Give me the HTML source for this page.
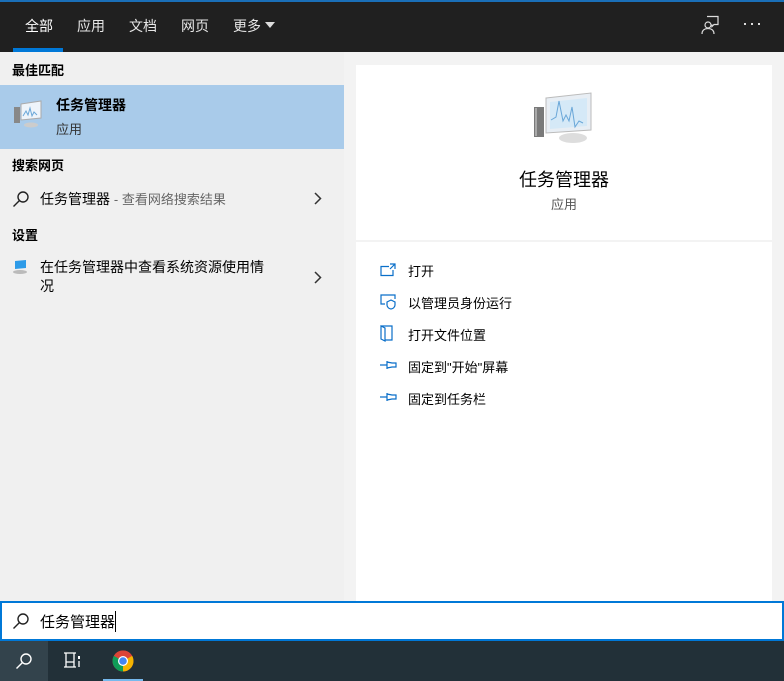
<!DOCTYPE html>
<html><head><meta charset="utf-8"><style>
*{margin:0;padding:0;box-sizing:border-box}
body{width:784px;height:681px;overflow:hidden;position:relative;background:#f0f0f0;font-family:"Liberation Sans","Noto Sans CJK SC",sans-serif;font-size:14px;color:#000}
.abs{position:absolute}
#top{left:0;top:0;width:784px;height:52px;background:#202020;border-top:2px solid #1a6fb8}
.tab{position:absolute;top:14px;color:#e6e6e6;font-size:14px}
#left{left:0;top:52px;width:344px;height:549px;background:#f0f0f0}
#right{left:344px;top:52px;width:440px;height:549px;background:#f3f3f3}
.card{position:absolute;left:356px;width:416px;background:#fff}
.h{position:absolute;left:12px;font-size:13px;font-weight:bold}
.act{position:absolute;left:408px;font-size:13px}
.ai{position:absolute;left:380px}
</style></head><body>
<div id="top" class="abs">
 <div class="tab" style="left:25px;color:#fff">全部</div>
 <div class="abs" style="left:13px;top:46px;width:50px;height:4px;background:#0078d7"></div>
 <div class="tab" style="left:77px">应用</div>
 <div class="tab" style="left:129px">文档</div>
 <div class="tab" style="left:181px">网页</div>
 <div class="tab" style="left:233px">更多</div>
 <svg class="abs" style="left:265px;top:20px" width="10" height="6"><path d="M0 0h10L5 6z" fill="#ddd"/></svg>
 <svg class="abs" style="left:701px;top:13px" width="18" height="20" fill="none" stroke="#ddd" stroke-width="1.2"><path d="M6 1.5h11v8h-4l-2 2v-2"/><circle cx="7" cy="10" r="3"/><path d="M1 19c0-4 3-5.5 6-5.5s6 1.5 6 5.5"/></svg>
 <div class="abs" style="left:744px;top:21px;width:16px;height:2px;background:repeating-linear-gradient(90deg,#ddd 0 2px,transparent 2px 7px)"></div>
</div>
<div id="left" class="abs"></div>
<div id="right" class="abs"></div>
<div class="h" style="top:60px">最佳匹配</div>
<div class="abs" style="left:0;top:85px;width:344px;height:64px;background:#a9cbea"></div>
<svg class="abs" style="left:12px;top:98px" width="32" height="32"><rect x="2" y="9" width="6" height="16" fill="#888"/><path d="M9 6l20-3v17L9 22z" fill="#eef4fa" stroke="#aaa"/><path d="M11 18l3-5 2 4 2-7 2 8 2-4 3 3" fill="none" stroke="#6aa7d8"/><ellipse cx="19" cy="27" rx="7" ry="2.5" fill="#ccc"/></svg>
<div class="abs" style="left:56px;top:95px;font-size:14px;font-weight:bold">任务管理器</div>
<div class="abs" style="left:56px;top:119px;font-size:13px;color:#333">应用</div>
<div class="h" style="top:155px">搜索网页</div>
<svg class="abs" style="left:12px;top:190px" width="18" height="18" fill="none" stroke="#222" stroke-width="1.4"><circle cx="11" cy="7" r="5"/><path d="M7.5 10.5L1.5 16.5"/></svg>
<div class="abs" style="left:40px;top:189px;font-size:14px">任务管理器 <span style="font-size:13px;color:#666">- 查看网络搜索结果</span></div>
<svg class="abs" style="left:314px;top:192px" width="8" height="13" fill="none" stroke="#333" stroke-width="1.5"><path d="M1 1l5.5 5.5L1 12"/></svg>
<div class="h" style="top:225px">设置</div>
<svg class="abs" style="left:11px;top:259px" width="18" height="16"><path d="M4 2l11 -1v8L4 10z" fill="#2e9be8"/><ellipse cx="9" cy="13" rx="7" ry="2" fill="#bbb"/></svg>
<div class="abs" style="left:40px;top:258px;font-size:14px;line-height:19px;width:228px;word-break:break-all">在任务管理器中查看系统资源使用情况</div>
<svg class="abs" style="left:314px;top:271px" width="8" height="13" fill="none" stroke="#333" stroke-width="1.5"><path d="M1 1l5.5 5.5L1 12"/></svg>

<div class="card" style="top:65px;height:175px"></div>
<div class="card" style="top:242px;height:359px"></div>
<svg class="abs" style="left:531px;top:90px" width="66" height="56"><rect x="3" y="17" width="10" height="30" fill="#7a7a7a"/><rect x="4" y="18" width="2" height="28" fill="#aaa"/><path d="M15 8l45-5v37l-45 3z" fill="#e8eef4" stroke="#bbb"/><path d="M19 12l37-4v28l-37 3z" fill="#d5e9f7"/><path d="M20 30l5-3 3-16 4 20 3-6 3 6 3-14 3 20 4-6 4 2" fill="none" stroke="#6aa7d8"/><ellipse cx="42" cy="48" rx="14" ry="5" fill="#ddd"/></svg>
<div class="abs" style="left:519px;top:166px;font-size:18px">任务管理器</div>
<div class="abs" style="left:551px;top:194px;font-size:13px;color:#555">应用</div>

<svg class="ai" style="top:263px" width="16" height="14" fill="none" stroke="#0a6fc9" stroke-width="1.2"><path d="M9 3.5H1v9h12V7"/><path d="M10 1h5v5M15 1l-5 5"/></svg>
<div class="act" style="top:261px">打开</div>
<svg class="ai" style="top:294px" width="16" height="16" fill="none" stroke="#0a6fc9" stroke-width="1.2"><path d="M5 10H1V1h14v4"/><path d="M7 8l4-2 4 2v3c0 2-2 4-4 4s-4-2-4-4z"/></svg>
<div class="act" style="top:293px">以管理员身份运行</div>
<svg class="ai" style="top:325px" width="14" height="17" fill="none" stroke="#0a6fc9" stroke-width="1.2"><path d="M1 1h11v14H5"/><path d="M1 1l4 2v13l-4-2z"/></svg>
<div class="act" style="top:325px">打开文件位置</div>
<svg class="ai" style="top:360px" width="17" height="10" fill="none" stroke="#0a6fc9" stroke-width="1.2"><path d="M0 5h7M7 1v8M7 2l5 1h4v4h-4l-5 1"/></svg>
<div class="act" style="top:357px">固定到"开始"屏幕</div>
<svg class="ai" style="top:392px" width="17" height="10" fill="none" stroke="#0a6fc9" stroke-width="1.2"><path d="M0 5h7M7 1v8M7 2l5 1h4v4h-4l-5 1"/></svg>
<div class="act" style="top:389px">固定到任务栏</div>

<div class="abs" style="left:0;top:601px;width:784px;height:40px;background:#fff;border:2px solid #0078d7"></div>
<svg class="abs" style="left:12px;top:612px" width="18" height="18" fill="none" stroke="#222" stroke-width="1.4"><circle cx="11" cy="7" r="5"/><path d="M7.5 10.5L1.5 16.5"/></svg>
<div class="abs" style="left:40px;top:611px;font-size:15px">任务管理器</div>
<div class="abs" style="left:115px;top:611px;width:1px;height:21px;background:#000"></div>

<div class="abs" style="left:0;top:641px;width:784px;height:40px;background:#223038"></div>
<div class="abs" style="left:0;top:641px;width:48px;height:40px;background:#33434c"></div>
<svg class="abs" style="left:15px;top:652px" width="18" height="18" fill="none" stroke="#fff" stroke-width="1.4"><circle cx="11" cy="7" r="5"/><path d="M7.5 10.5L1.5 16.5"/></svg>
<svg class="abs" style="left:63px;top:652px" width="18" height="16" fill="none" stroke="#fff" stroke-width="1.3"><path d="M1 1h12M1 15h12M3 1v14M11 1v14M3 10h8"/><rect x="15" y="4" width="2" height="3" fill="#fff" stroke="none"/><path d="M16 9v6"/></svg>
<svg class="abs" style="left:112px;top:650px" width="22" height="22" viewBox="0 0 22 22"><circle cx="11" cy="11" r="10.5" fill="#db4437"/><path d="M11 11L1.9 5.8A10.5 10.5 0 0 0 11 21.5z" fill="#0f9d58"/><path d="M11 11L20.1 5.8A10.5 10.5 0 0 1 11 21.5z" fill="#f4b400"/><path d="M11 11L1.9 5.8 A10.5 10.5 0 0 1 20.1 5.8z" fill="#db4437"/><circle cx="11" cy="11" r="5" fill="#fff"/><circle cx="11" cy="11" r="3.8" fill="#4285f4"/></svg>
<div class="abs" style="left:103px;top:679px;width:40px;height:2px;background:#76b9ed"></div>
</body></html>
